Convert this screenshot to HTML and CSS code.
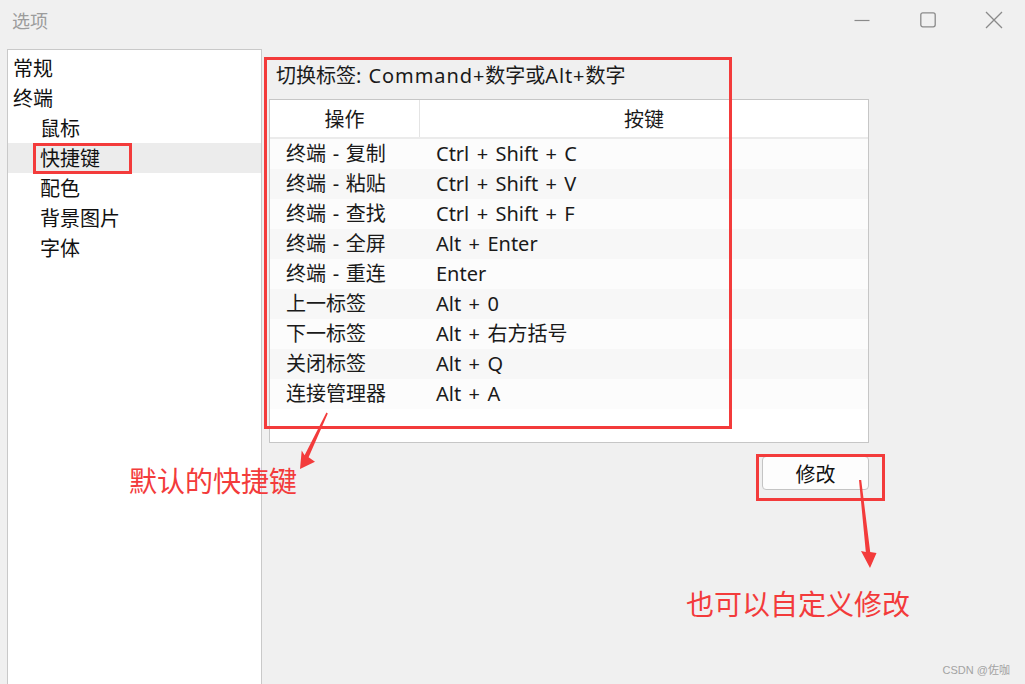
FILE: index.html
```html
<!DOCTYPE html>
<html lang="zh-CN">
<head>
<meta charset="utf-8">
<title>选项</title>
<link rel="stylesheet" href="styles.css">
</head>
<body>
<div class="window">
  <header class="titlebar">
    <span class="title">选项</span>
    <div class="controls">
      <span class="ctl"><svg width="16" height="16" viewBox="0 0 16 16"><line x1="0.5" y1="8.5" x2="15.5" y2="8.5" stroke="#8a8a8a" stroke-width="1.2"/></svg></span>
      <span class="ctl"><svg width="16" height="16" viewBox="0 0 16 16"><rect x="0.8" y="0.8" width="14.4" height="14" rx="2" fill="none" stroke="#8a8a8a" stroke-width="1.3"/></svg></span>
      <span class="ctl"><svg width="18" height="18" viewBox="0 0 18 18"><path d="M1 1 L17 17 M17 1 L1 17" stroke="#8a8a8a" stroke-width="1.3" fill="none"/></svg></span>
    </div>
  </header>

  <div class="main">
    <aside class="tree">
      <div class="item">常规</div>
      <div class="item">终端</div>
      <div class="item child">鼠标</div>
      <div class="item child selected">快捷键</div>
      <div class="item child">配色</div>
      <div class="item child">背景图片</div>
      <div class="item child">字体</div>
    </aside>

    <section class="content">
      <div class="hint">切换标签: <span class="lat">Command+</span>数字或<span class="lat">Alt+</span>数字</div>
      <div class="table">
        <div class="thead">
          <div class="th first">操作</div>
          <div class="th">按键</div>
        </div>
        <div class="row"><span class="c1">终端 - 复制</span><span class="c2">Ctrl + Shift + C</span></div>
        <div class="row"><span class="c1">终端 - 粘贴</span><span class="c2">Ctrl + Shift + V</span></div>
        <div class="row"><span class="c1">终端 - 查找</span><span class="c2">Ctrl + Shift + F</span></div>
        <div class="row"><span class="c1">终端 - 全屏</span><span class="c2">Alt + Enter</span></div>
        <div class="row"><span class="c1">终端 - 重连</span><span class="c2">Enter</span></div>
        <div class="row"><span class="c1">上一标签</span><span class="c2">Alt + 0</span></div>
        <div class="row"><span class="c1">下一标签</span><span class="c2">Alt + 右方括号</span></div>
        <div class="row"><span class="c1">关闭标签</span><span class="c2">Alt + Q</span></div>
        <div class="row"><span class="c1">连接管理器</span><span class="c2">Alt + A</span></div>
      </div>
      <div class="actions"><button class="btn">修改</button></div>
    </section>
  </div>

  <!-- annotations -->
  <div class="mark mark-item"></div>
  <div class="mark mark-table"></div>
  <div class="mark mark-btn"></div>
  <svg class="arrows" width="1025" height="684" viewBox="0 0 1025 684">
    <polygon points="326.4,412.6 304.6,455.2 301.7,450.5 300,469 315,461.7 308.6,457.2 327.8,413.4" fill="#f33b3b"/>
    <polygon points="859,480 865.8,552 861,551 870,568 876.5,553 870.2,552 861.2,480" fill="#f33b3b"/>
  </svg>
  <div class="note note-default">默认的快捷键</div>
  <div class="note note-custom">也可以自定义修改</div>
  <div class="watermark">CSDN @佐咖</div>
</div>
</body>
</html>
```

FILE: styles.css
```css
html, body {
  margin: 0;
  padding: 0;
}
body {
  background: #f0f0f0;
  font-family: "Noto Sans", "Noto Sans CJK SC", sans-serif;
  color: #1a1a1a;
}
.window {
  position: relative;
  width: 1025px;
  height: 684px;
  overflow: hidden;
  background: #f0f0f0;
}
.titlebar {
  height: 40px;
  display: flex;
  align-items: center;
  justify-content: space-between;
}
.title {
  padding-left: 12px;
  font-family: "Noto Sans CJK SC", sans-serif;
  font-size: 18px;
  color: #9c9c9c;
  line-height: 40px;
}
.controls {
  display: flex;
  margin-right: -2px;
}
.ctl {
  width: 66px;
  height: 40px;
  display: flex;
  align-items: center;
  justify-content: center;
}
.main {
  display: flex;
  padding-top: 9px;
}
.tree {
  margin-left: 7px;
  width: 255px;
  height: 660px;
  box-sizing: border-box;
  border: 1px solid #c9c9c9;
  background: #ffffff;
  padding-top: 3px;
}
.item {
  height: 30px;
  line-height: 30px;
  padding-left: 5px;
  font-family: "Noto Sans CJK SC", sans-serif;
  font-size: 20px;
  color: #111;
}
.item.child {
  padding-left: 32px;
}
.item.selected {
  background: #ececec;
}
.content {
  padding-left: 7px;
  width: 600px;
}
.hint {
  margin-top: 12px;
  padding-left: 7px;
  height: 30px;
  line-height: 30px;
  font-size: 20px;
  white-space: nowrap;
  word-spacing: 2px;
}
.lat {
  letter-spacing: 0.9px;
}
.table {
  margin-top: 8px;
  width: 600px;
  height: 344px;
  box-sizing: border-box;
  border: 1px solid #c6c6c6;
  background: #ffffff;
}
.thead {
  display: grid;
  grid-template-columns: 150px 1fr;
  height: 37px;
  border-bottom: 2px solid #ebebeb;
}
.th {
  text-align: center;
  line-height: 37px;
  font-family: "Noto Sans CJK SC", sans-serif;
  font-size: 20px;
}
.th.first {
  border-right: 1px solid #e4e4e4;
}
.row {
  display: grid;
  grid-template-columns: 150px 1fr;
  height: 30px;
  line-height: 30px;
  font-size: 20px;
  background: #fcfcfc;
}
.row:nth-child(odd) {
  background: #f7f7f7;
}
.c1 {
  padding-left: 16px;
  white-space: nowrap;
  word-spacing: 1.5px;
}
.c2 {
  padding-left: 16px;
  white-space: nowrap;
  word-spacing: 2.2px;
}
.actions {
  display: flex;
  justify-content: flex-end;
  margin-top: 13px;
}
.btn {
  width: 107px;
  height: 34px;
  border: 1px solid #c4c4c4;
  border-radius: 4px;
  background: #fdfdfd;
  font-family: "Noto Sans CJK SC", sans-serif;
  font-size: 20px;
  color: #111;
  padding: 0;
}
.mark {
  position: absolute;
  border: 3px solid #f33b3b;
  box-sizing: border-box;
}
.mark-item {
  left: 33px;
  top: 143px;
  width: 99px;
  height: 31px;
}
.mark-table {
  left: 264px;
  top: 57px;
  width: 468px;
  height: 372px;
}
.mark-btn {
  left: 756px;
  top: 454px;
  width: 129px;
  height: 47px;
}
.arrows {
  position: absolute;
  left: 0;
  top: 0;
}
.note {
  position: absolute;
  font-family: "Noto Sans CJK SC", sans-serif;
  font-size: 28px;
  color: #f33b3b;
  line-height: 40px;
  white-space: nowrap;
}
.note-default {
  left: 129px;
  top: 460px;
}
.note-custom {
  left: 686px;
  top: 583px;
}
.watermark {
  position: absolute;
  right: 15px;
  top: 661px;
  font-family: "Liberation Sans", Arial, sans-serif;
  font-size: 11px;
  color: #a3a3a3;
}
```
